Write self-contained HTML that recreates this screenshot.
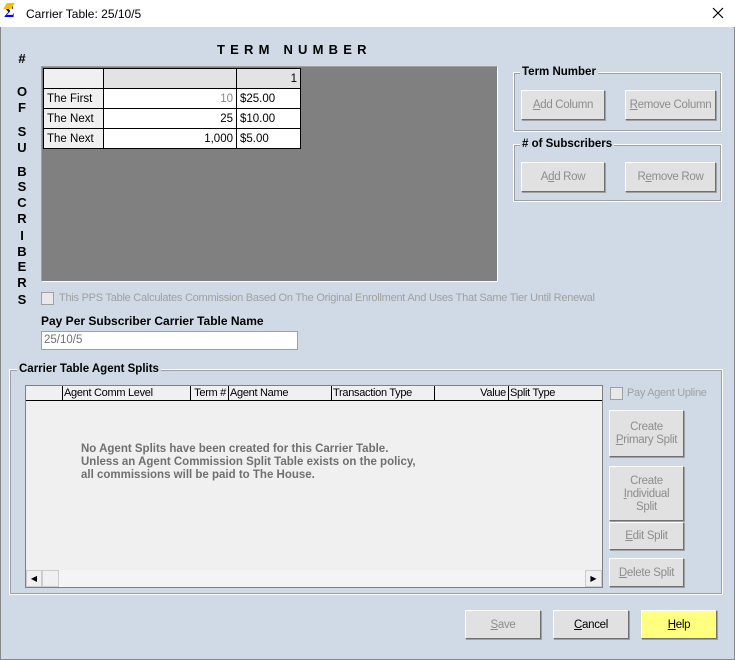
<!DOCTYPE html><html><head><style>
*{margin:0;padding:0;box-sizing:border-box}
body{width:735px;height:660px;position:relative;background:#cfdae6;font-family:"Liberation Sans",sans-serif;font-size:11px;overflow:hidden;color:#000}
.a{position:absolute}
.btn{position:absolute;background:#e1e1e1;border:1px solid;border-color:#fff #707070 #707070 #fff;box-shadow:1px 1px 0 #a0a0a0;color:#8d8d8d;text-align:center;display:flex;align-items:center;justify-content:center;font-size:11.5px;line-height:13px;letter-spacing:-0.3px;padding-top:1px}
.grp{position:absolute;border:1px solid #fff;outline:1px solid #a0a0a0;outline-offset:-2px}
.gl{position:absolute;background:#cfdae6;font-weight:bold;font-size:11.5px;padding:0 2px;top:-7px;left:6px}
.vl{position:absolute;left:17px;width:10px;text-align:center;font-weight:bold;font-size:13px}
.c{position:absolute;border:1px solid #000;background:#fff;font-size:11.5px;line-height:20px;padding:0 3px}
.h{position:absolute;top:386px;height:15px;border-right:1px solid #000;font-size:11px;line-height:15px;padding:0 2px;letter-spacing:-0.3px}
</style></head><body>
<div class="a" style="left:0;top:0;width:735px;height:27px;background:#fff"></div>
<div class="a" style="left:4px;top:4px;font-size:16px;font-weight:bold;color:#0000ff;font-family:'Liberation Serif',serif;line-height:18px">Σ</div>
<div class="a" style="left:5px;top:3px;width:8px;height:6px;background:#f2c200;transform:skewX(-30deg)"></div>
<div class="a" style="left:26px;top:7px;font-size:12px">Carrier Table: 25/10/5</div>
<svg class="a" style="left:712px;top:7px" width="12" height="12"><path d="M1 1L11 11M11 1L1 11" stroke="#000" stroke-width="1.2"/></svg>
<div class="a" style="left:0;top:27px;width:1px;height:633px;background:#888"></div>
<div class="a" style="left:734px;top:27px;width:1px;height:633px;background:#888"></div>
<div class="a" style="left:0;top:659px;width:735px;height:1px;background:#888"></div>

<div class="a" style="left:217px;top:42px;font-weight:bold;font-size:13px;letter-spacing:5.2px">TERM NUMBER</div>
<div class="vl" style="top:51px">#</div>
<div class="vl" style="top:84px">O</div><div class="vl" style="top:100px">F</div>
<div class="vl" style="top:124px">S</div><div class="vl" style="top:140px">U</div>
<div class="vl" style="top:164px">B</div><div class="vl" style="top:179px">S</div>
<div class="vl" style="top:195px">C</div><div class="vl" style="top:211px">R</div>
<div class="vl" style="top:228px">I</div><div class="vl" style="top:244px">B</div>
<div class="vl" style="top:259px">E</div><div class="vl" style="top:275px">R</div>
<div class="vl" style="top:292px">S</div>

<div class="a" style="left:41px;top:66px;width:457px;height:216px;background:#808080;border:1px solid;border-color:#a0a0a0 #fff #fff #a0a0a0"></div>
<div class="c" style="left:43px;top:68px;width:61px;height:21px;background:#f0f0f0"></div>
<div class="c" style="left:103px;top:68px;width:134px;height:21px;background:#e3e3e3"></div>
<div class="c" style="left:236px;top:68px;width:65px;height:21px;background:#e3e3e3;text-align:right">1</div>
<div class="c" style="left:43px;top:88px;width:61px;height:21px;background:#f0f0f0">The First</div>
<div class="c" style="left:103px;top:88px;width:134px;height:21px;text-align:right;color:#888">10</div>
<div class="c" style="left:236px;top:88px;width:65px;height:21px">$25.00</div>
<div class="c" style="left:43px;top:108px;width:61px;height:21px;background:#f0f0f0">The Next</div>
<div class="c" style="left:103px;top:108px;width:134px;height:21px;text-align:right">25</div>
<div class="c" style="left:236px;top:108px;width:65px;height:21px">$10.00</div>
<div class="c" style="left:43px;top:128px;width:61px;height:21px;background:#f0f0f0">The Next</div>
<div class="c" style="left:103px;top:128px;width:134px;height:21px;text-align:right">1,000</div>
<div class="c" style="left:236px;top:128px;width:65px;height:21px">$5.00</div>

<div class="grp" style="left:513px;top:72px;width:209px;height:60px"><div class="gl">Term Number</div></div>
<div class="btn" style="left:521px;top:90px;width:84px;height:30px"><span><u>A</u>dd Column</span></div>
<div class="btn" style="left:625px;top:90px;width:91px;height:30px"><span><u>R</u>emove Column</span></div>
<div class="grp" style="left:513px;top:144px;width:209px;height:58px"><div class="gl"># of Subscribers</div></div>
<div class="btn" style="left:521px;top:162px;width:84px;height:30px"><span>A<u>d</u>d Row</span></div>
<div class="btn" style="left:625px;top:162px;width:91px;height:30px"><span>R<u>e</u>move Row</span></div>

<div class="a" style="left:41px;top:292px;width:13px;height:13px;border:1px solid #a0a0a0;background:#e8e8e8"></div>
<div class="a" style="left:59px;top:292px;color:#a0a0a0;font-size:11px;letter-spacing:-0.25px">This PPS Table Calculates Commission Based On The Original Enrollment And Uses That Same Tier Until Renewal</div>
<div class="a" style="left:41px;top:314px;font-weight:bold;font-size:12px">Pay Per Subscriber Carrier Table Name</div>
<div class="a" style="left:41px;top:331px;width:257px;height:19px;background:#fff;border:1px solid #a0a0a0;color:#707070;font-size:11.5px;line-height:17px;padding-left:2px">25/10/5</div>

<div class="grp" style="left:9px;top:369px;width:714px;height:226px"><div class="gl" style="left:7px">Carrier Table Agent Splits</div></div>
<div class="a" style="left:25px;top:385px;width:578px;height:203px;background:#f0f0f0;border:1px solid #808080"></div>
<div class="a" style="left:26px;top:400px;width:576px;height:1px;background:#000"></div>
<div class="h" style="left:26px;width:37px"></div>
<div class="h" style="left:62px;width:129px">Agent Comm Level</div>
<div class="h" style="left:190px;width:39px;text-align:right">Term #</div>
<div class="h" style="left:228px;width:104px">Agent Name</div>
<div class="h" style="left:331px;width:104px">Transaction Type</div>
<div class="h" style="left:434px;width:75px;text-align:right">Value</div>
<div class="h" style="left:508px;width:94px;border-right:none">Split Type</div>
<div class="a" style="left:81px;top:443px;color:#707070;font-weight:bold;font-size:11.5px;line-height:13px">No Agent Splits have been created for this Carrier Table.<br>Unless an Agent Commission Split Table exists on the policy,<br>all commissions will be paid to The House.</div>
<div class="a" style="left:26px;top:570px;width:576px;height:17px;background:#f4f4f4"></div>
<div class="a" style="left:26px;top:570px;width:16px;height:17px;background:#f0f0f0;border:1px solid #ccc;font-size:8px;text-align:center;line-height:15px">◀</div>
<div class="a" style="left:42px;top:570px;width:17px;height:17px;background:#f0f0f0;border:1px solid #ccc"></div>
<div class="a" style="left:585px;top:570px;width:17px;height:17px;background:#f0f0f0;border:1px solid #ccc;font-size:8px;text-align:center;line-height:15px">▶</div>

<div class="a" style="left:610px;top:387px;width:13px;height:13px;border:1px solid #a0a0a0;background:#e8e8e8"></div>
<div class="a" style="left:627px;top:387px;color:#a0a0a0;font-size:11px;letter-spacing:-0.3px">Pay Agent Upline</div>
<div class="btn" style="left:609px;top:410px;width:75px;height:47px"><span>Create<br><u>P</u>rimary Split</span></div>
<div class="btn" style="left:609px;top:466px;width:75px;height:55px"><span>Create<br><u>I</u>ndividual<br>Split</span></div>
<div class="btn" style="left:609px;top:522px;width:75px;height:28px"><span><u>E</u>dit Split</span></div>
<div class="btn" style="left:609px;top:558px;width:75px;height:29px"><span><u>D</u>elete Split</span></div>

<div class="btn" style="left:465px;top:610px;width:76px;height:29px"><span><u>S</u>ave</span></div>
<div class="btn" style="left:553px;top:610px;width:76px;height:29px;color:#000"><span><u>C</u>ancel</span></div>
<div class="btn" style="left:641px;top:610px;width:76px;height:29px;color:#000;background:#ffff80"><span><u>H</u>elp</span></div>
</body></html>
